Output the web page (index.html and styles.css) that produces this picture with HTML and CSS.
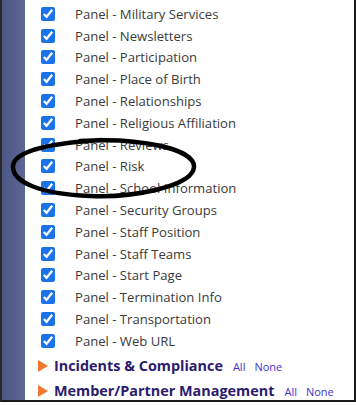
FILE: index.html
```html
<!DOCTYPE html>
<html lang="en">
<head>
<meta charset="UTF-8" />
<title>Permissions</title>
<link rel="stylesheet" href="styles.css">
</head>
<body>
<div class="frame">
  <div class="sidebar"></div>
  <div class="content">
    <ul class="perms">
      <li><input type="checkbox" checked> <span>Panel - Military Services</span></li>
      <li><input type="checkbox" checked> <span>Panel - Newsletters</span></li>
      <li><input type="checkbox" checked> <span>Panel - Participation</span></li>
      <li><input type="checkbox" checked> <span>Panel - Place of Birth</span></li>
      <li><input type="checkbox" checked> <span>Panel - Relationships</span></li>
      <li><input type="checkbox" checked> <span>Panel - Religious Affiliation</span></li>
      <li><input type="checkbox" checked> <span>Panel - Reviews</span></li>
      <li><input type="checkbox" checked> <span>Panel - Risk</span></li>
      <li><input type="checkbox" checked> <span>Panel - School Information</span></li>
      <li><input type="checkbox" checked> <span>Panel - Security Groups</span></li>
      <li><input type="checkbox" checked> <span>Panel - Staff Position</span></li>
      <li><input type="checkbox" checked> <span>Panel - Staff Teams</span></li>
      <li><input type="checkbox" checked> <span>Panel - Start Page</span></li>
      <li><input type="checkbox" checked> <span>Panel - Termination Info</span></li>
      <li><input type="checkbox" checked> <span>Panel - Transportation</span></li>
      <li><input type="checkbox" checked> <span>Panel - Web URL</span></li>
    </ul>
    <div class="group">
      <span class="arrow"></span>
      <span class="group-title">Incidents &amp; Compliance</span>
      <a href="#" class="pick">All</a>
      <a href="#" class="pick">None</a>
    </div>
    <div class="group">
      <span class="arrow"></span>
      <span class="group-title">Member/Partner Management</span>
      <a href="#" class="pick">All</a>
      <a href="#" class="pick">None</a>
    </div>
    <!-- hand-drawn circle around the Risk row -->
    <svg class="circle" width="192" height="64" viewBox="0 0 192 64">
      <path d="M70 4 C130 0 185 12 184 30 C183 50 120 61 80 59 C30 57 2 45 3 29 C4 14 40 6 92 3"
            fill="none" stroke="#000" stroke-width="4.5" stroke-linecap="round"/>
    </svg>
  </div>
</div>
</body>
</html>
```

FILE: styles.css
```css
body {
  margin: 0;
  background: #fff;
  font-family: "Open Sans", "Noto Sans", Arial, sans-serif;
}
.frame {
  display: flex;
  width: 352px;
  height: 400px;
  border-left: 2px solid #2a2a2a;
  border-right: 2px solid #1a1a1a;
  border-bottom: 2px solid #1a1a1a;
  overflow: hidden;
}
.sidebar {
  width: 23px;
  flex-shrink: 0;
  background: linear-gradient(to right, #4c5583, #5d6794);
}
.content {
  position: relative;
  flex: 1;
  padding-left: 16px;
}
.perms {
  list-style: none;
  margin: 0;
  padding: 3px 0 0;
}
.perms li {
  display: flex;
  align-items: center;
  height: 21.8px;
  font-size: 13.1px;
  color: #3a3a3a;
}
.perms input {
  width: 14px;
  height: 14px;
  margin: 0 20px 0 0;
  accent-color: #1a73e8;
}
.group {
  display: flex;
  align-items: baseline;
  height: 21px;
  padding-top: 4px;
  margin-left: -3px;
  white-space: nowrap;
}
.arrow {
  width: 0;
  height: 0;
  border-top: 6px solid transparent;
  border-bottom: 6px solid transparent;
  border-left: 10px solid #f07830;
  margin-right: 6px;
  align-self: center;
}
.group-title {
  font-size: 14.4px;
  font-weight: 700;
  color: #2b1b6e;
  margin-right: 10px;
}
.pick {
  font-size: 11px;
  color: #3d33cc;
  text-decoration: none;
  margin-right: 9px;
}
.circle {
  position: absolute;
  left: -15px;
  top: 137px;
}
```
